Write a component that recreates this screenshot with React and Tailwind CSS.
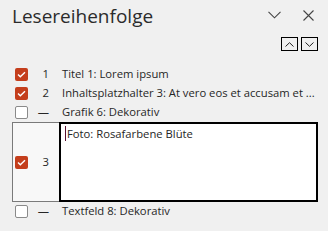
import React from 'react';

function CheckBox({ checked }) {
  if (checked) {
    return (
      <div className="w-[13px] h-[13px] rounded-[2px] bg-[#c43e1c] flex items-center justify-center">
        <svg width="9" height="7" viewBox="0 0 9 7" fill="none">
          <path d="M1 3.6 L3.3 5.8 L8 1.2" stroke="white" strokeWidth="1.4" />
        </svg>
      </div>
    );
  }
  return <div className="w-[13px] h-[13px] rounded-[2px] bg-white border border-[#8a8a8a]" />;
}

function Row({ checked, num, label }) {
  return (
    <div className="h-[19px] flex items-center">
      <div className="w-[15px]" />
      <CheckBox checked={checked} />
      <div className="w-[22px] text-right pr-[1px]">{num}</div>
      <div className="pl-[12px] whitespace-nowrap">{label}</div>
    </div>
  );
}

export default function App() {
  return (
    <div
      className="w-[328px] h-[231px] bg-[#f0f0f0] text-[#262626] overflow-hidden"
      style={{ fontFamily: '"Open Sans", "Noto Sans", sans-serif' }}
    >
      <div className="h-[34px] flex items-center justify-between pl-[12px] pr-[14px]">
        <div className="text-[19px] leading-[24px] font-normal text-[#2b2b2b] -mt-[3px]">Lesereihenfolge</div>
        <div className="flex items-center gap-[22px] -mt-[4px]">
          <svg width="13" height="8" viewBox="0 0 13 8" fill="none">
            <path d="M0.5 0.8 L6.5 6.8 L12.5 0.8" stroke="#444" strokeWidth="1.1" />
          </svg>
          <svg width="11" height="11" viewBox="0 0 11 11" fill="none">
            <path d="M0.5 0.5 L10.5 10.5 M10.5 0.5 L0.5 10.5" stroke="#444" strokeWidth="1.1" />
          </svg>
        </div>
      </div>
      <div className="flex justify-end gap-[3px] pr-[10px] mt-[3px]">
        <div className="w-[17px] h-[14px] border border-black bg-[#f0f0f0] flex items-center justify-center">
          <svg width="9" height="5" viewBox="0 0 9 5" fill="none">
            <path d="M0.5 4.5 L4.5 0.7 L8.5 4.5" stroke="#222" strokeWidth="1" />
          </svg>
        </div>
        <div className="w-[17px] h-[14px] border border-black bg-[#f0f0f0] flex items-center justify-center">
          <svg width="9" height="5" viewBox="0 0 9 5" fill="none">
            <path d="M0.5 0.5 L4.5 4.3 L8.5 0.5" stroke="#222" strokeWidth="1" />
          </svg>
        </div>
      </div>
      <div className="mt-[14px] text-[11.25px]">
        <Row checked num="1" label="Titel 1: Lorem ipsum" />
        <Row checked num="2" label="Inhaltsplatzhalter 3: At vero eos et accusam et ..." />
        <Row checked={false} num="—" label="Grafik 6: Dekorativ" />
        <div className="ml-[12px] w-[306px] h-[80px] border border-[#7a7a7a] bg-[#f8f8f8] flex">
          <div className="w-[47px] flex items-center">
            <div className="w-[2px]" />
            <CheckBox checked />
            <div className="w-[22px] text-right pr-[1px]">3</div>
          </div>
          <div className="flex-1 bg-white border-2 border-black -m-px pl-[4px] pt-[2px]">
            <span className="border-l border-[#5a1030] pl-[1px]">Foto: Rosafarbene Blüte</span>
          </div>
        </div>
        <Row checked={false} num="—" label="Textfeld 8: Dekorativ" />
      </div>
    </div>
  );
}
